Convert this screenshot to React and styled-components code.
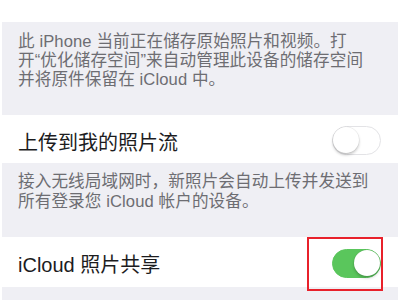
import React from "react";
import styled, { createGlobalStyle } from "styled-components";

const Global = createGlobalStyle`
  html, body { margin: 0; padding: 0; background: #ffffff; }
  body { font-family: "Noto Sans CJK SC", "Liberation Sans", sans-serif; }
  * { box-sizing: border-box; }
`;

const Page = styled.div`
  width: 400px;
  height: 300px;
  overflow: hidden;
  padding: 22px 2px 0;
`;

const Panel = styled.div`
  background: #efeff4;
  display: flex;
  flex-direction: column;
`;

const Note = styled.p`
  margin: 0;
  padding: ${(p) => p.$pad};
  font-family: "Liberation Sans", "Noto Sans CJK SC", sans-serif;
  font-size: 16.6px;
  line-height: ${(p) => p.$lh};
  color: #6d6d72;
  letter-spacing: 0.1px;
`;

const Row = styled.div`
  position: relative;
  background: #ffffff;
  height: ${(p) => p.$h}px;
  display: flex;
  align-items: center;
  justify-content: space-between;
  padding: 0 17px 0 16px;
`;

const Label = styled.span`
  font-family: "Liberation Sans", "Noto Sans CJK SC", sans-serif;
  font-size: 20px;
  color: #1c1c1e;
  padding-top: ${(p) => p.$dy || 0}px;
`;

const Switch = styled.div`
  position: relative;
  width: 49px;
  height: 29px;
  margin-top: ${(p) => p.$dy || 0}px;
  border-radius: 15px;
  background: ${(p) => (p.$on ? "#5ac65c" : "#ffffff")};
  border: 1.5px solid ${(p) => (p.$on ? "#5ac65c" : "#e3e3e6")};
  flex-shrink: 0;
`;

const Knob = styled.div`
  position: absolute;
  top: 0;
  ${(p) => (p.$on ? "right: 0;" : "left: 0;")}
  width: 26px;
  height: 26px;
  border-radius: 50%;
  background: #ffffff;
  box-shadow: 0 2px 3px rgba(0, 0, 0, 0.22), 0 0 0 0.5px rgba(0, 0, 0, 0.08);
`;

const Highlight = styled.div`
  position: absolute;
  left: 305px;
  top: 0;
  width: 76px;
  height: 54px;
  border: 2px solid #e8212b;
  pointer-events: none;
`;

const Filler = styled.div`
  height: 20px;
`;

export default function App() {
  return (
    <>
      <Global />
      <Page>
        <Panel>
          <Note $pad="10px 16px 26px" $lh="19px">
            此 iPhone 当前正在储存原始照片和视频。打
            <br />
            开“优化储存空间”来自动管理此设备的储存空间
            <br />
            并将原件保留在 iCloud 中。
          </Note>
          <Row $h={48}>
            <Label $dy={5}>上传到我的照片流</Label>
            <Switch $dy={3}>
              <Knob />
            </Switch>
          </Row>
          <Note $pad="9px 16px 25px" $lh="20px">
            接入无线局域网时，新照片会自动上传并发送到
            <br />
            所有登录您 iCloud 帐户的设备。
          </Note>
          <Row $h={50}>
            <Label $dy={2}>iCloud 照片共享</Label>
            <Switch $on $dy={2}>
              <Knob $on />
            </Switch>
            <Highlight />
          </Row>
          <Filler />
        </Panel>
      </Page>
    </>
  );
}
